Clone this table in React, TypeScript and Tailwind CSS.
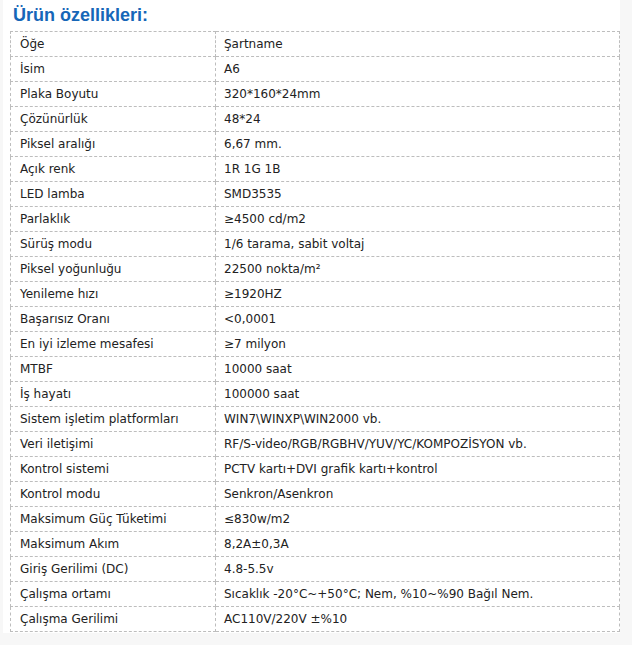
import React from 'react';

const rows: [string, string][] = [
  ['Öğe', 'Şartname'],
  ['İsim', 'A6'],
  ['Plaka Boyutu', '320*160*24mm'],
  ['Çözünürlük', '48*24'],
  ['Piksel aralığı', '6,67 mm.'],
  ['Açık renk', '1R 1G 1B'],
  ['LED lamba', 'SMD3535'],
  ['Parlaklık', '≥4500 cd/m2'],
  ['Sürüş modu', '1/6 tarama, sabit voltaj'],
  ['Piksel yoğunluğu', '22500 nokta/m²'],
  ['Yenileme hızı', '≥1920HZ'],
  ['Başarısız Oranı', '<0,0001'],
  ['En iyi izleme mesafesi', '≥7 milyon'],
  ['MTBF', '10000 saat'],
  ['İş hayatı', '100000 saat'],
  ['Sistem işletim platformları', 'WIN7\\WINXP\\WIN2000 vb.'],
  ['Veri iletişimi', 'RF/S-video/RGB/RGBHV/YUV/YC/KOMPOZİSYON vb.'],
  ['Kontrol sistemi', 'PCTV kartı+DVI grafik kartı+kontrol'],
  ['Kontrol modu', 'Senkron/Asenkron'],
  ['Maksimum Güç Tüketimi', '≤830w/m2'],
  ['Maksimum Akım', '8,2A±0,3A'],
  ['Giriş Gerilimi (DC)', '4.8-5.5v'],
  ['Çalışma ortamı', 'Sıcaklık -20°C~+50°C; Nem, %10~%90 Bağıl Nem.'],
  ['Çalışma Gerilimi', 'AC110V/220V ±%10'],
];

export default function App() {
  return (
    <div className="min-h-[645px] w-[632px] bg-[#f7f7f7] pl-[3px]">
      <div className="w-[617px] bg-white pl-[7px] pb-[1px]">
        <h2 className="h-[31px] pl-[3px] pt-[4px] font-['Liberation_Sans',Arial,sans-serif] text-[18px] font-bold leading-[22px] text-[#1666b8]">
          Ürün özellikleri:
        </h2>
        <table className="w-[610px] border-collapse font-['DejaVu_Sans',Verdana,sans-serif] text-[12px] text-[#222]">
          <tbody>
            {rows.map(([k, v]) => (
              <tr key={k} className="h-[25px]">
                <td className="w-[205px] border border-dashed border-[#bdbdbd] pl-[9px] py-0 align-middle">{k}</td>
                <td className="border border-dashed border-[#bdbdbd] pl-[8px] py-0 align-middle">{v}</td>
              </tr>
            ))}
          </tbody>
        </table>
      </div>
    </div>
  );
}
